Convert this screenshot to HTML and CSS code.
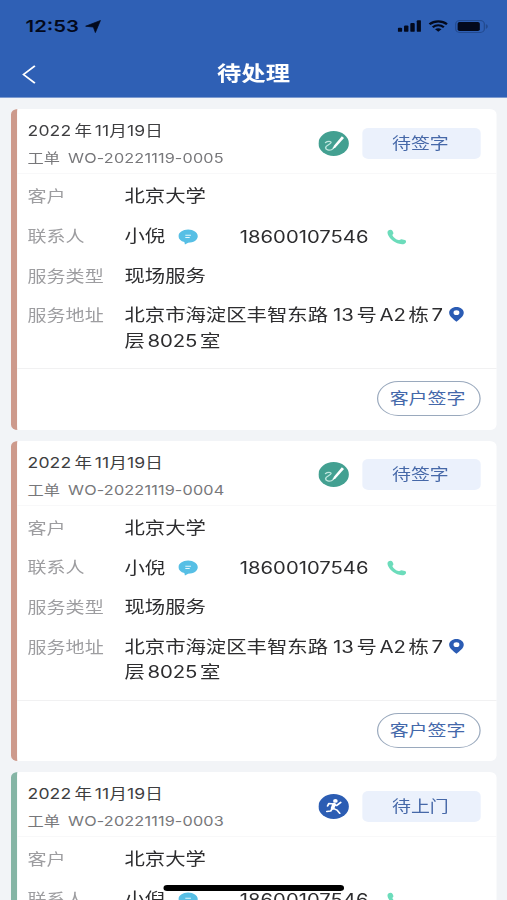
FILE: index.html
```
<!DOCTYPE html>
<html lang="zh-CN">
<head>
<meta charset="utf-8">
<title>待处理</title>
<link rel="stylesheet" href="styles.css">
</head>
<body>
<svg class="defs" aria-hidden="true">
  <symbol id="sign" viewBox="0 0 25 25">
    <circle cx="12.5" cy="12.5" r="12.5" fill="#43a091"/>
    <path d="M5.800 11.600c1.500-1.700 4.800-1.600 4.500.1-.4 1.800-4.500 2.600-4.400 5 .1 2.200 3 3 4.800 2.100 1.200-.5 1.300-1.400 1.700-2.200" fill="none" stroke="#bfe6de" stroke-width="1.200" stroke-linecap="round"/>
    <path d="M19.200 5.200l1.800 1.700-7 9.700-2.100 1.300.6-2.900z" fill="#fff"/>
  </symbol>
  <symbol id="run" viewBox="0 0 25 25">
    <circle cx="12.5" cy="12.5" r="12.5" fill="#2c5db3"/>
    <circle cx="13.900" cy="6.900" r="1.900" fill="#fff"/>
    <path d="M12.800 10.200l-1.200 4" fill="none" stroke="#fff" stroke-width="3" stroke-linecap="round"/>
    <path d="M7.500 12l1-2.400 4 .3 2.300 1.700 3.500-3.200M11.600 14.200l3.700 1.900 2.200 3.200M11.300 14.600l-1.300 2.500-3.100.4" fill="none" stroke="#fff" stroke-width="1.500" stroke-linecap="round" stroke-linejoin="round"/>
  </symbol>
  <symbol id="chat" viewBox="0 0 16 16">
    <path d="M8 .6c4.400 0 7.900 3 7.900 6.600 0 3.700-3.500 6.500-7.900 6.500l-2.600 1.800-.5-2.400C2 12 .1 9.900.1 7.200.1 3.600 3.600.6 8 .6z" fill="#57bfe5"/>
    <path d="M5.700 6.200h4.600M5.700 8.400h3.600" stroke="#e4f7fd" stroke-width="1"/>
  </symbol>
  <symbol id="phone" viewBox="0 0 17 17">
    <path d="M1.100 1.700C2.300.5 4 .6 4.800 2l.7 2.300c.2 1-1.100 1.600-.8 2.500.9 2 3 4.100 5.300 5 .9.300 1.500-1 2.500-.9l3 .7c1.300.5 1.300 2.200.5 3.300-.9 1.500-3.200 1.600-5.400.9C5.700 14.200 1.900 10 .6 5.600.2 4.100.2 2.600 1.100 1.700z" fill="#6cdcbb"/>
  </symbol>
  <symbol id="pin" viewBox="0 0 12 15">
    <path fill-rule="evenodd" d="M6 0c3.300 0 6 2.500 6 5.700 0 3.500-3.300 6.200-6 9.100C3.300 11.900 0 9.200 0 5.700 0 2.500 2.700 0 6 0zm0 3.300a2.400 2.400 0 1 0 0 4.800 2.400 2.400 0 0 0 0-4.800z" fill="#2b5cb4"/>
  </symbol>
</svg>
<div class="screen">
  <header class="top">
    <div class="status">
      <span class="clock">12:53</span>
      <svg class="arrow" viewBox="0 0 13 13"><path d="M12.800.3L8.500 12.800 6.800 7.100.2 6.200z"/></svg>
      <svg class="signal" viewBox="0 0 20 12"><rect x="0" y="7.800" width="3.700" height="4.200" rx="1"/><rect x="5.300" y="5.500" width="3.700" height="6.500" rx="1"/><rect x="10.600" y="2.900" width="3.700" height="9.100" rx="1"/><rect x="16" y="0" width="3.700" height="12" rx="1"/></svg>
      <svg class="wifi" viewBox="0 0 17 12"><g fill="none" stroke="#03091c"><path d="M1.100 4.200c4.200-3.900 10.600-3.900 14.800 0" stroke-width="2.200"/><path d="M3.800 7.200c2.700-2.500 6.700-2.500 9.400 0" stroke-width="2"/></g><path d="M8.500 12L5.800 9.300c1.600-1.400 3.800-1.400 5.400 0z"/></svg>
      <svg class="battery" viewBox="0 0 27 13" preserveAspectRatio="none"><rect x=".5" y=".5" width="23.500" height="12" rx="3.400" fill="none" stroke="#234a8f"/><rect x="2.100" y="2.100" width="18.200" height="8.800" rx="1.600"/><path d="M25.200 4.300c2.200.5 2.200 3.900 0 4.400z" fill="#234a8f"/></svg>
    </div>
    <nav class="nav">
      <svg class="back" viewBox="0 0 12 19"><path d="M10.600.9L1.300 9.500l9.300 8.600" fill="none" stroke="#fff" stroke-width="1.600"/></svg>
      <h1>待处理</h1>
    </nav>
  </header>

  <main class="list">
    <article class="card">
      <div class="card-head">
        <div class="ident">
          <div class="date">2022<i>年</i>11月19日</div>
          <div class="order">工单<span>WO-20221119-0005</span></div>
        </div>
        <svg class="state-icon"><use href="#sign"/></svg>
        <div class="state">待签字</div>
      </div>
      <dl class="rows">
        <dt>客户</dt><dd>北京大学</dd>
        <dt>联系人</dt><dd class="contact"><span class="name">小倪</span><svg class="chat"><use href="#chat"/></svg><span class="tel">18600107546</span><svg class="phone"><use href="#phone"/></svg></dd>
        <dt>服务类型</dt><dd>现场服务</dd>
        <dt>服务地址</dt><dd class="address"><span>北京市海淀区丰智东路<b class="no">13</b>号<b>A2</b>栋<b>7</b><br>层<b>8025</b>室</span><svg class="pin"><use href="#pin"/></svg></dd>
      </dl>
      <div class="card-foot"><button>客户签字</button></div>
    </article>

    <article class="card">
      <div class="card-head">
        <div class="ident">
          <div class="date">2022<i>年</i>11月19日</div>
          <div class="order">工单<span>WO-20221119-0004</span></div>
        </div>
        <svg class="state-icon"><use href="#sign"/></svg>
        <div class="state">待签字</div>
      </div>
      <dl class="rows">
        <dt>客户</dt><dd>北京大学</dd>
        <dt>联系人</dt><dd class="contact"><span class="name">小倪</span><svg class="chat"><use href="#chat"/></svg><span class="tel">18600107546</span><svg class="phone"><use href="#phone"/></svg></dd>
        <dt>服务类型</dt><dd>现场服务</dd>
        <dt>服务地址</dt><dd class="address"><span>北京市海淀区丰智东路<b class="no">13</b>号<b>A2</b>栋<b>7</b><br>层<b>8025</b>室</span><svg class="pin"><use href="#pin"/></svg></dd>
      </dl>
      <div class="card-foot"><button>客户签字</button></div>
    </article>

    <article class="card visit">
      <div class="card-head">
        <div class="ident">
          <div class="date">2022<i>年</i>11月19日</div>
          <div class="order">工单<span>WO-20221119-0003</span></div>
        </div>
        <svg class="state-icon"><use href="#run"/></svg>
        <div class="state">待上门</div>
      </div>
      <dl class="rows">
        <dt>客户</dt><dd>北京大学</dd>
        <dt>联系人</dt><dd class="contact"><span class="name">小倪</span><svg class="chat"><use href="#chat"/></svg><span class="tel">18600107546</span><svg class="phone"><use href="#phone"/></svg></dd>
      </dl>
    </article>
  </main>
  <div class="home-bar"></div>
</div>
</body>
</html>
```
FILE: styles.css
```
* { box-sizing: border-box; }

html, body { margin: 0; height: 900px; overflow: hidden; }

body {
  background: #f2f4f7;
  font-family: Inter, "Noto Sans CJK SC", sans-serif;
}

.defs { position: absolute; width: 0; height: 0; }

/* The interface is drawn wide: everything is stretched horizontally by 1.22. */
.screen {
  position: relative;
  width: 415.6px;
  height: 900px;
  overflow: hidden;
  transform: scaleX(1.22);
  transform-origin: 0 0;
}

.top {
  height: 98px;
  background: #2f60b5;
  border-bottom: 1px solid #7d9bd0;
}

.status {
  display: flex;
  align-items: center;
  height: 52px;
  padding: 0 15.5px 0 21px;
  fill: #03091c;
}

.clock {
  color: #03091c;
  font-size: 16.6px;
  font-weight: 600;
  width: 44.5px;
}

.arrow { width: 12.5px; height: 13px; margin-left: 4.3px; overflow: visible; stroke: #03091c; stroke-width: .7; }
.signal { width: 19.5px; height: 12px; margin-left: auto; }
.wifi { width: 16.5px; height: 12px; margin-left: 5.5px; }
.battery { width: 27px; height: 13px; margin-left: 6px; }

.nav {
  display: grid;
  grid-template-columns: 30px 1fr 30px;
  align-items: center;
  height: 44px;
  padding: 0 17.5px;
}

.back { width: 12px; height: 19px; }

h1 {
  margin: 0;
  color: #fff;
  text-align: center;
  font-size: 19.9px;
  font-weight: 700;
  line-height: 44px;
}

.list {
  display: flex;
  flex-direction: column;
  gap: 11px;
  padding: 11.4px 8.2px 0 9px;
}

.card {
  flex: none;
  height: 320.4px;
  background: #fff;
  border-left: 5.9px solid #cd9a8c;
  border-radius: 5.5px;
}

.card.visit { border-left-color: #85b5a5; }

.card-head {
  display: flex;
  align-items: center;
  height: 65px;
  padding: 0 13.5px 0 8.6px;
  border-bottom: 1px solid #f8f8f9;
}

.ident { flex: 1; padding-top: 7px; white-space: nowrap; }

.date {
  color: #3e3e40;
  font-size: 14.4px;
  line-height: 28px;
  letter-spacing: .1px;
}

.address b { font-weight: 400; }
.date i { font-style: normal; margin: 0 2.2px 0 2.6px; }

.order {
  color: #77777a;
  font-size: 13.3px;
  line-height: 27px;
}

.order span { margin-left: 6.6px; letter-spacing: .13px; }

.state-icon { width: 25px; height: 25px; margin: 4px 11.2px 0 0; }

.state {
  width: 97.2px;
  height: 31px;
  margin-top: 4px;
  padding-right: 1.5px;
  border-radius: 5px;
  background: #ebf1fc;
  color: #4668a8;
  font-size: 15.5px;
  line-height: 32px;
  text-align: center;
}

.rows {
  display: grid;
  grid-template-columns: 79.4px 1fr;
  grid-auto-rows: minmax(39.7px, auto);
  height: 195px;
  margin: 0;
  padding: 10px 0 0 8.6px;
  align-content: start;
  border-bottom: 1px solid #f1f1f2;
}

dt { color: #9d9da0; font-size: 15.6px; line-height: 26px; }
dd { margin: 0; color: #2d2d2f; font-size: 16.7px; line-height: 25.6px; white-space: nowrap; }

.contact { display: flex; align-items: center; height: 26px; }
.name { width: 44.4px; }
.chat { width: 16.4px; height: 16px; }
.tel { width: 105.8px; margin-left: 33.8px; font-size: 16.6px; line-height: 26px; }
.phone { width: 16.6px; height: 16px; margin-left: 14.8px; }

.address { display: flex; }
.address b { margin: 0 2.2px; letter-spacing: -.05px; }
.address .no { margin-left: 4.2px; }
.pin { width: 12.3px; height: 15px; margin: 4px 0 0 3px; }

.card-foot {
  display: flex;
  justify-content: flex-end;
  padding: 12px 13.5px 0 0;
}

button {
  width: 85px;
  height: 35px;
  padding: 0 2px 0 0;
  border: 1px solid #9aa9bd;
  border-radius: 18px;
  background: #fff;
  color: #4468aa;
  font: 15.5px/33px Inter, "Noto Sans CJK SC", sans-serif;
}

.home-bar {
  position: absolute;
  left: 134.4px;
  top: 885px;
  width: 148px;
  height: 6px;
  border-radius: 3px;
  background: #000;
}
```
